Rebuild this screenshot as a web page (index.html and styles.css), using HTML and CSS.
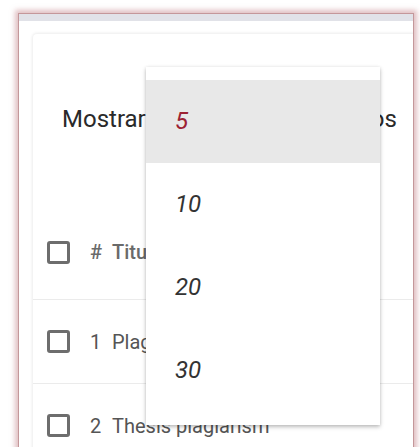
FILE: index.html
```html
<!DOCTYPE html>
<html lang="es">
<head>
<meta charset="utf-8">
<title>Listado</title>
<link rel="stylesheet" href="styles.css">
</head>
<body>
<div class="frame">
  <div class="frame-bar"></div>
  <div class="frame-body">
    <div class="card">
      <div class="length-line">Mostrar <span class="select-slot"></span> registros</div>
      <div class="table">
        <div class="row head">
          <span class="check"></span>
          <span class="num">#</span>
          <span class="title">Titulo</span>
        </div>
        <div class="row">
          <span class="check"></span>
          <span class="num">1</span>
          <span class="title">Plagiarism check</span>
        </div>
        <div class="row">
          <span class="check"></span>
          <span class="num">2</span>
          <span class="title">Thesis plagiarism</span>
        </div>
      </div>
    </div>
  </div>
  <ul class="menu">
    <li class="active">5</li>
    <li>10</li>
    <li>20</li>
    <li>30</li>
  </ul>
</div>
</body>
</html>
```
FILE: styles.css
```css
html, body {
  margin: 0;
  padding: 0;
  background: #ffffff;
  font-family: Roboto, "Noto Sans", sans-serif;
  overflow: hidden;
}

.frame {
  position: relative;
  margin: 13px 0 0 18px;
  width: 394px;
  height: 460px;
  border: 1px solid #c4979a;
  box-shadow: 0 0 5px 3px rgba(195, 130, 135, 0.5);
  background: #ffffff;
  overflow: hidden;
}

.frame-bar {
  height: 7px;
  background: #e1e2e8;
}

.frame-body {
  padding: 13px 0 0 14px;
}

.card {
  width: 400px;
  background: #fff;
  border-radius: 4px;
  box-shadow: 0 0 3px 1px rgba(0, 0, 0, 0.08);
}

.length-line {
  box-sizing: border-box;
  height: 171px;
  padding: 71px 0 0 29px;
  font-size: 24px;
  color: #2a2a2a;
  white-space: nowrap;
}

.select-slot {
  display: inline-block;
  width: 145px;
}

.row {
  display: flex;
  align-items: center;
  height: 83px;
  border-bottom: 1px solid #ebebeb;
  font-size: 20px;
  color: #555;
}

.row.head {
  height: 94px;
  font-weight: 500;
  color: #6a6a6a;
}

.check {
  width: 17px;
  height: 17px;
  border: 3px solid #6d6d6d;
  border-radius: 3px;
  margin-left: 14px;
  flex: none;
}

.num {
  margin-left: 20px;
  width: 22px;
}

.title {
  white-space: nowrap;
}

.menu {
  position: absolute;
  left: 127px;
  top: 53px;
  width: 234px;
  margin: 0;
  padding: 13px 0;
  list-style: none;
  background: #fff;
  box-shadow: 0 2px 4px rgba(0, 0, 0, 0.25), 0 0 3px rgba(0, 0, 0, 0.08);
}

.menu li {
  height: 83px;
  line-height: 83px;
  padding-left: 29px;
  font-size: 24px;
  font-style: italic;
  color: #333;
}

.menu li.active {
  background: #e8e8e8;
  color: #9c2233;
}
```
